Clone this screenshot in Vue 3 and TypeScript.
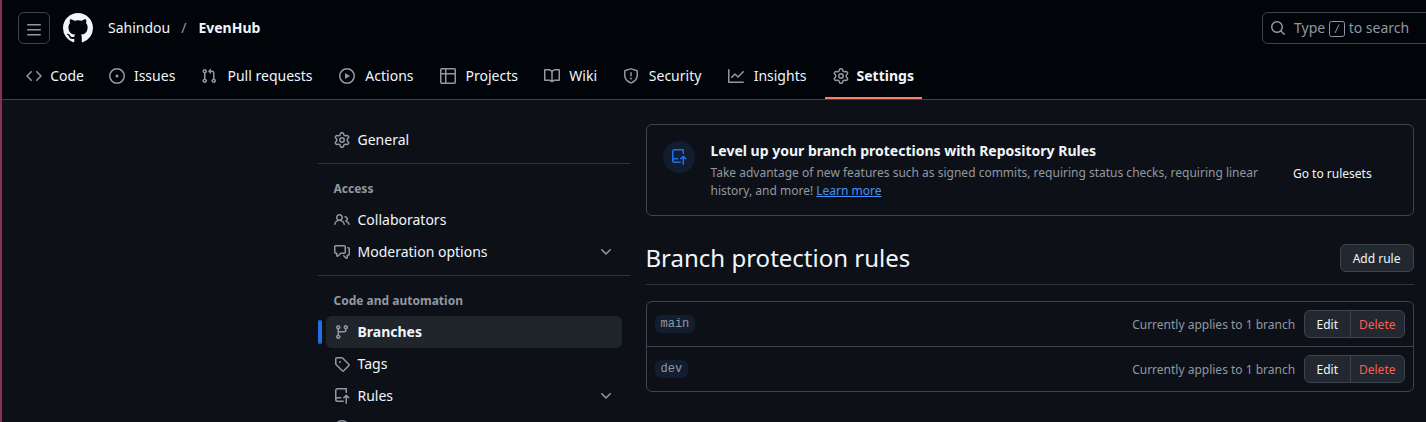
<script setup lang="ts">
type IconName =
  | 'code' | 'issue' | 'pull' | 'play' | 'table' | 'book' | 'shield' | 'graph'
  | 'gear' | 'people' | 'discussion' | 'branch' | 'tag' | 'repoPush'

interface NavItem { label: string; icon: IconName; active?: boolean; expandable?: boolean }
interface NavGroup { title?: string; items: NavItem[] }

const icons: Record<IconName, string> = {
  code: 'm11.28 3.22 4.25 4.25a.75.75 0 0 1 0 1.06l-4.25 4.25a.749.749 0 0 1-1.275-.326.749.749 0 0 1 .215-.734L13.94 8l-3.72-3.72a.749.749 0 0 1 .326-1.275.749.749 0 0 1 .734.215Zm-6.56 0a.751.751 0 0 1 1.042.018.751.751 0 0 1 .018 1.042L2.06 8l3.72 3.72a.749.749 0 0 1-.326 1.275.749.749 0 0 1-.734-.215L.47 8.53a.75.75 0 0 1 0-1.06Z',
  issue: 'M8 9.5a1.5 1.5 0 1 0 0-3 1.5 1.5 0 0 0 0 3Z M8 0a8 8 0 1 1 0 16A8 8 0 0 1 8 0ZM1.5 8a6.5 6.5 0 1 0 13 0 6.5 6.5 0 0 0-13 0Z',
  pull: 'M1.5 3.25a2.25 2.25 0 1 1 3 2.122v5.256a2.251 2.251 0 1 1-1.5 0V5.372A2.25 2.25 0 0 1 1.5 3.25Zm5.677-.177L9.573.677A.25.25 0 0 1 10 .854V2.5h1A2.5 2.5 0 0 1 13.5 5v5.628a2.251 2.251 0 1 1-1.5 0V5a1 1 0 0 0-1-1h-1v1.646a.25.25 0 0 1-.427.177L7.177 3.427a.25.25 0 0 1 0-.354ZM3.75 2.5a.75.75 0 1 0 0 1.5.75.75 0 0 0 0-1.5Zm0 9.5a.75.75 0 1 0 0 1.5.75.75 0 0 0 0-1.5Zm8.25.75a.75.75 0 1 0 1.5 0 .75.75 0 0 0-1.5 0Z',
  play: 'M8 0a8 8 0 1 1 0 16A8 8 0 0 1 8 0ZM1.5 8a6.5 6.5 0 1 0 13 0 6.5 6.5 0 0 0-13 0Zm4.879-2.773 4.264 2.559a.25.25 0 0 1 0 .428l-4.264 2.559A.25.25 0 0 1 6 10.559V5.442a.25.25 0 0 1 .379-.215Z',
  table: 'M0 1.75C0 .784.784 0 1.75 0h12.5C15.216 0 16 .784 16 1.75v12.5A1.75 1.75 0 0 1 14.25 16H1.75A1.75 1.75 0 0 1 0 14.25ZM6.5 6.5v8h7.75a.25.25 0 0 0 .25-.25V6.5Zm8-1.5V1.75a.25.25 0 0 0-.25-.25H6.5V5Zm-13 1.5v7.75c0 .138.112.25.25.25H5v-8ZM5 5V1.5H1.75a.25.25 0 0 0-.25.25V5Z',
  book: 'M0 1.75A.75.75 0 0 1 .75 1h4.253c1.227 0 2.317.59 3 1.501A3.743 3.743 0 0 1 11.006 1h4.245a.75.75 0 0 1 .75.75v10.5a.75.75 0 0 1-.75.75h-4.507a2.25 2.25 0 0 0-1.591.659l-.622.621a.75.75 0 0 1-1.06 0l-.622-.621A2.25 2.25 0 0 0 5.258 13H.75a.75.75 0 0 1-.75-.75Zm7.251 10.324.004-5.073-.002-2.253A2.25 2.25 0 0 0 5.003 2.5H1.5v9h3.757a3.75 3.75 0 0 1 1.994.574ZM8.755 4.75l-.004 7.322a3.752 3.752 0 0 1 1.992-.572H14.5v-9h-3.495a2.25 2.25 0 0 0-2.25 2.25Z',
  shield: 'M7.467.133a1.748 1.748 0 0 1 1.066 0l5.25 1.68A1.75 1.75 0 0 1 15 3.48V7c0 1.566-.32 3.182-1.303 4.682-.983 1.498-2.585 2.813-5.032 3.855a1.697 1.697 0 0 1-1.33 0c-2.447-1.042-4.049-2.357-5.032-3.855C1.32 10.182 1 8.566 1 7V3.48a1.75 1.75 0 0 1 1.217-1.667Zm.61 1.429a.25.25 0 0 0-.153 0l-5.25 1.68a.25.25 0 0 0-.174.238V7c0 1.358.275 2.666 1.057 3.86.784 1.194 2.121 2.34 4.366 3.297a.196.196 0 0 0 .154 0c2.245-.956 3.582-2.104 4.366-3.298C13.225 9.666 13.5 8.36 13.5 7V3.48a.251.251 0 0 0-.174-.237l-5.25-1.68ZM8.75 4.75v3a.75.75 0 0 1-1.5 0v-3a.75.75 0 0 1 1.5 0ZM9 10.5a1 1 0 1 1-2 0 1 1 0 0 1 2 0Z',
  graph: 'M1.5 1.75V13.5h13.75a.75.75 0 0 1 0 1.5H.75a.75.75 0 0 1-.75-.75V1.75a.75.75 0 0 1 1.5 0Zm14.28 2.53-5.25 5.25a.75.75 0 0 1-1.06 0L7 7.06 4.28 9.78a.751.751 0 0 1-1.042-.018.751.751 0 0 1-.018-1.042l3.25-3.25a.75.75 0 0 1 1.06 0L10 7.94l4.72-4.72a.751.751 0 0 1 1.042.018.751.751 0 0 1 .018 1.042Z',
  gear: 'M8 0a8.2 8.2 0 0 1 .701.031C9.444.095 9.99.645 10.16 1.29l.288 1.107c.018.066.079.158.212.224.231.114.454.243.668.386.123.082.233.09.299.071l1.103-.303c.644-.176 1.392.021 1.82.63.27.385.506.792.704 1.218.315.675.111 1.422-.364 1.891l-.814.806c-.049.048-.098.147-.088.294.016.257.016.515 0 .772-.01.147.038.246.088.294l.814.806c.475.469.679 1.216.364 1.891a7.977 7.977 0 0 1-.704 1.217c-.428.61-1.176.807-1.82.63l-1.102-.302c-.067-.019-.177-.011-.3.071a5.909 5.909 0 0 1-.668.386c-.133.066-.194.158-.211.224l-.29 1.106c-.168.646-.715 1.196-1.458 1.26a8.006 8.006 0 0 1-1.402 0c-.743-.064-1.289-.614-1.458-1.26l-.289-1.106c-.018-.066-.079-.158-.212-.224a5.738 5.738 0 0 1-.668-.386c-.123-.082-.233-.09-.299-.071l-1.103.303c-.644.176-1.392-.021-1.82-.63a8.12 8.12 0 0 1-.704-1.218c-.315-.675-.111-1.422.363-1.891l.815-.806c.05-.048.098-.147.088-.294a6.214 6.214 0 0 1 0-.772c.01-.147-.038-.246-.088-.294l-.815-.806C.635 6.045.431 5.298.746 4.623a7.92 7.92 0 0 1 .704-1.217c.428-.61 1.176-.807 1.82-.63l1.102.302c.067.019.177.011.3-.071.214-.143.437-.272.668-.386.133-.066.194-.158.211-.224l.29-1.106C6.009.645 6.556.095 7.299.03 7.53.01 7.764 0 8 0Zm-.571 1.525c-.036.003-.108.036-.137.146l-.289 1.105c-.147.561-.549.967-.998 1.189-.173.086-.34.183-.5.29-.417.278-.97.423-1.529.27l-1.103-.303c-.109-.03-.175.016-.195.045-.22.312-.412.644-.573.99-.014.031-.021.11.059.19l.815.806c.411.406.562.957.53 1.456a4.709 4.709 0 0 0 0 .582c.032.499-.119 1.05-.53 1.456l-.815.806c-.081.08-.073.159-.059.19.162.346.353.677.573.989.02.03.085.076.195.046l1.102-.303c.56-.153 1.113-.008 1.53.27.161.107.328.204.501.29.447.222.85.629.997 1.189l.289 1.105c.029.109.101.143.137.146a6.6 6.6 0 0 0 1.142 0c.036-.003.108-.036.137-.146l.289-1.105c.147-.561.549-.967.998-1.189.173-.086.34-.183.5-.29.417-.278.97-.423 1.529-.27l1.103.303c.109.029.175-.016.195-.045.22-.313.411-.644.573-.99.014-.031.021-.11-.059-.19l-.815-.806c-.411-.406-.562-.957-.53-1.456a4.709 4.709 0 0 0 0-.582c-.032-.499.119-1.05.53-1.456l.815-.806c.081-.08.073-.159.059-.19a6.464 6.464 0 0 0-.573-.989c-.02-.03-.085-.076-.195-.046l-1.102.303c-.56.153-1.113.008-1.53-.27a4.44 4.44 0 0 0-.501-.29c-.447-.222-.85-.629-.997-1.189l-.289-1.105c-.029-.11-.101-.143-.137-.146a6.6 6.6 0 0 0-1.142 0ZM11 8a3 3 0 1 1-6 0 3 3 0 0 1 6 0ZM9.5 8a1.5 1.5 0 1 0-3.001.001A1.5 1.5 0 0 0 9.5 8Z',
  people: 'M2 5.5a3.5 3.5 0 1 1 5.898 2.549 5.508 5.508 0 0 1 3.034 4.084.75.75 0 1 1-1.482.235 4 4 0 0 0-7.9 0 .75.75 0 0 1-1.482-.236A5.507 5.507 0 0 1 3.102 8.05 3.493 3.493 0 0 1 2 5.5ZM11 4a3.001 3.001 0 0 1 2.22 5.018 5.01 5.01 0 0 1 2.56 3.012.749.749 0 0 1-.885.954.752.752 0 0 1-.549-.514 3.507 3.507 0 0 0-2.522-2.372.75.75 0 0 1-.574-.73v-.352a.75.75 0 0 1 .416-.672A1.5 1.5 0 0 0 11 5.5.75.75 0 0 1 11 4Zm-5.5-.5a2 2 0 1 0-.001 3.999A2 2 0 0 0 5.5 3.5Z',
  discussion: 'M1.75 1h8.5c.966 0 1.75.784 1.75 1.75v5.5A1.75 1.75 0 0 1 10.25 10H7.061l-2.574 2.573A1.458 1.458 0 0 1 2 11.543V10h-.25A1.75 1.75 0 0 1 0 8.25v-5.5C0 1.784.784 1 1.75 1ZM1.5 2.75v5.5c0 .138.112.25.25.25h1a.75.75 0 0 1 .75.75v2.19l2.72-2.72a.749.749 0 0 1 .53-.22h3.5a.25.25 0 0 0 .25-.25v-5.5a.25.25 0 0 0-.25-.25h-8.5a.25.25 0 0 0-.25.25Zm13 2a.25.25 0 0 0-.25-.25h-.5a.75.75 0 0 1 0-1.5h.5c.966 0 1.75.784 1.75 1.75v5.5A1.75 1.75 0 0 1 14.25 12H14v1.543a1.458 1.458 0 0 1-2.487 1.03L9.22 12.28a.749.749 0 0 1 .326-1.275.749.749 0 0 1 .734.215l2.22 2.22v-2.19a.75.75 0 0 1 .75-.75h1a.25.25 0 0 0 .25-.25Z',
  branch: 'M9.5 3.25a2.25 2.25 0 1 1 3 2.122V6A2.5 2.5 0 0 1 10 8.5H6a1 1 0 0 0-1 1v1.128a2.251 2.251 0 1 1-1.5 0V5.372a2.25 2.25 0 1 1 1.5 0v1.836A2.493 2.493 0 0 1 6 7h4a1 1 0 0 0 1-1v-.628A2.25 2.25 0 0 1 9.5 3.25Zm-6 0a.75.75 0 1 0 1.5 0 .75.75 0 0 0-1.5 0Zm8.25-.75a.75.75 0 1 0 0 1.5.75.75 0 0 0 0-1.5ZM4.25 12a.75.75 0 1 0 0 1.5.75.75 0 0 0 0-1.5Z',
  tag: 'M1 7.775V2.75C1 1.784 1.784 1 2.75 1h5.025c.464 0 .91.184 1.238.513l6.25 6.25a1.75 1.75 0 0 1 0 2.474l-5.026 5.026a1.75 1.75 0 0 1-2.474 0l-6.25-6.25A1.752 1.752 0 0 1 1 7.775Zm1.5 0c0 .066.026.13.073.177l6.25 6.25a.25.25 0 0 0 .354 0l5.025-5.025a.25.25 0 0 0 0-.354l-6.25-6.25a.25.25 0 0 0-.177-.073H2.75a.25.25 0 0 0-.25.25ZM6 5a1 1 0 1 1 0 2 1 1 0 0 1 0-2Z',
  repoPush: 'M1 2.5A2.5 2.5 0 0 1 3.5 0h8.75a.75.75 0 0 1 .75.75v3.5a.75.75 0 0 1-1.5 0V1.5h-8a1 1 0 0 0-1 1v6.708A2.493 2.493 0 0 1 3.5 9h3.25a.75.75 0 0 1 0 1.5H3.5a1 1 0 0 0 0 2h5.75a.75.75 0 0 1 0 1.5H3.5A2.5 2.5 0 0 1 1 11.5Zm13.23 7.79-1.24-1.15v6.11a.75.75 0 0 1-1.5 0V9.14l-1.22 1.15a.75.75 0 0 1-1.04-1.08l2.505-2.36a.75.75 0 0 1 1.02 0l2.505 2.36a.75.75 0 1 1-1.03 1.08Z',
}
const chevron = 'M12.78 5.22a.749.749 0 0 1 0 1.06l-4.25 4.25a.749.749 0 0 1-1.06 0L3.22 6.28a.749.749 0 1 1 1.06-1.06L8 8.939l3.72-3.719a.749.749 0 0 1 1.06 0Z'

const tabs: NavItem[] = [
  { label: 'Code', icon: 'code' },
  { label: 'Issues', icon: 'issue' },
  { label: 'Pull requests', icon: 'pull' },
  { label: 'Actions', icon: 'play' },
  { label: 'Projects', icon: 'table' },
  { label: 'Wiki', icon: 'book' },
  { label: 'Security', icon: 'shield' },
  { label: 'Insights', icon: 'graph' },
  { label: 'Settings', icon: 'gear', active: true },
]

const groups: NavGroup[] = [
  { items: [{ label: 'General', icon: 'gear' }] },
  {
    title: 'Access',
    items: [
      { label: 'Collaborators', icon: 'people' },
      { label: 'Moderation options', icon: 'discussion', expandable: true },
    ],
  },
  {
    title: 'Code and automation',
    items: [
      { label: 'Branches', icon: 'branch', active: true },
      { label: 'Tags', icon: 'tag' },
      { label: 'Rules', icon: 'repoPush', expandable: true },
      { label: '', icon: 'play' },
    ],
  },
]

const rules: string[] = ['main', 'dev']
</script>

<template>
  <div class="page">
    <header class="header">
      <div class="topbar">
        <button class="menu" aria-label="Menu">
          <svg class="icon" viewBox="0 0 16 16"><path d="M1 2.75A.75.75 0 0 1 1.75 2h12.5a.75.75 0 0 1 0 1.5H1.75A.75.75 0 0 1 1 2.75Zm0 5A.75.75 0 0 1 1.75 7h12.5a.75.75 0 0 1 0 1.5H1.75A.75.75 0 0 1 1 7.75ZM1.75 12h12.5a.75.75 0 0 1 0 1.5H1.75a.75.75 0 0 1 0-1.5Z" /></svg>
        </button>
        <svg class="logo" viewBox="0 0 16 16"><path d="M8 0c4.42 0 8 3.58 8 8a8.013 8.013 0 0 1-5.45 7.59c-.4.08-.55-.17-.55-.38 0-.27.01-1.13.01-2.2 0-.75-.25-1.23-.54-1.48 1.78-.2 3.65-.88 3.65-3.95 0-.88-.31-1.59-.82-2.15.08-.2.36-1.02-.08-2.12 0 0-.67-.22-2.2.82-.64-.18-1.32-.27-2-.27-.68 0-1.36.09-2 .27-1.53-1.03-2.2-.82-2.2-.82-.44 1.1-.16 1.92-.08 2.12-.51.56-.82 1.28-.82 2.15 0 3.06 1.86 3.75 3.64 3.95-.23.2-.44.55-.51 1.07-.46.21-1.61.55-2.33-.66-.15-.24-.6-.83-1.23-.82-.67.01-.27.38.01.53.34.19.73.9.82 1.13.16.45.68 1.31 2.69.94 0 .67.01 1.3.01 1.49 0 .21-.15.45-.55.38A7.995 7.995 0 0 1 0 8c0-4.42 3.58-8 8-8Z" /></svg>
        <nav class="crumbs">
          <span>Sahindou</span><span class="slash">/</span><b>EvenHub</b>
        </nav>
        <div class="search">
          <svg class="icon" viewBox="0 0 16 16"><path d="M10.68 11.74a6 6 0 0 1-7.922-8.982 6 6 0 0 1 8.982 7.922l3.04 3.04a.749.749 0 0 1-.326 1.275.749.749 0 0 1-.734-.215ZM11.5 7a4.499 4.499 0 1 0-8.997 0A4.499 4.499 0 0 0 11.5 7Z" /></svg>
          <span class="hint">Type</span>
          <svg class="key" viewBox="0 0 16 16"><rect x=".5" y=".5" width="15" height="15" rx="2" /><path d="M10 3.5 6 12" /></svg>
          <span>to search</span>
        </div>
      </div>
      <nav class="tabs">
        <a v-for="tab in tabs" :key="tab.label" class="tab" :class="{ active: tab.active }">
          <svg class="icon" viewBox="0 0 16 16"><path :d="icons[tab.icon]" /></svg>
          <span class="tab-label" :data-content="tab.label">{{ tab.label }}</span>
        </a>
      </nav>
    </header>

    <div class="body">
      <aside class="sidebar">
        <section v-for="(group, i) in groups" :key="i" class="group">
          <h3 v-if="group.title">{{ group.title }}</h3>
          <a v-for="item in group.items" :key="item.label" class="item" :class="{ active: item.active }">
            <svg class="icon" viewBox="0 0 16 16"><path :d="icons[item.icon]" /></svg>
            <span class="item-label">{{ item.label }}</span>
            <svg v-if="item.expandable" class="icon" viewBox="0 0 16 16"><path :d="chevron" /></svg>
          </a>
        </section>
      </aside>

      <main class="main">
        <section class="banner">
          <div class="badge"><svg class="icon" viewBox="0 0 16 16"><path :d="icons.repoPush" /></svg></div>
          <div class="banner-text">
            <h2>Level up your branch protections with Repository Rules</h2>
            <p>Take advantage of new features such as signed commits, requiring status checks, requiring linear history, and more! <a>Learn more</a></p>
          </div>
          <a class="goto">Go to rulesets</a>
        </section>

        <div class="heading">
          <h1>Branch protection rules</h1>
          <button class="btn">Add rule</button>
        </div>

        <ul class="rules">
          <li v-for="rule in rules" :key="rule">
            <code>{{ rule }}</code>
            <span class="applies">Currently applies to 1 branch</span>
            <div class="btn-group">
              <button class="btn">Edit</button>
              <button class="btn danger">Delete</button>
            </div>
          </li>
        </ul>
      </main>
    </div>
  </div>
</template>

<style>
body {
  margin: 0;
  background: #0d1117;
}
</style>

<style scoped>
* {
  box-sizing: border-box;
}
.page {
  width: 1426px;
  height: 422px;
  overflow: hidden;
  border-left: 2px solid #85325a;
  background: #0d1117;
  color: #f0f6fc;
  font: 14px/20px "Noto Sans", sans-serif;
}
.icon {
  width: 16px;
  height: 16px;
  flex: none;
  fill: #9198a1;
}
.header {
  height: 100px;
  background: #010409;
  border-bottom: 1px solid #3d444d;
}
.topbar {
  display: flex;
  align-items: center;
  height: 56px;
  padding-left: 16px;
}
.menu {
  display: grid;
  place-items: center;
  width: 32px;
  height: 32px;
  padding: 3px 0 0;
  background: none;
  border: 1px solid #3d444d;
  border-radius: 6px;
}
.logo {
  width: 30px;
  height: 30px;
  margin-left: 13px;
  fill: #f0f6fc;
}
.crumbs {
  display: flex;
  margin-left: 15px;
}
.slash {
  margin: 0 12px 0 11px;
  color: #9198a1;
}
b {
  font-weight: 700;
}
.search {
  display: flex;
  align-items: center;
  width: 180px;
  height: 32px;
  margin-left: auto;
  margin-right: -16px;
  padding-left: 7px;
  border: 1px solid #3d444d;
  border-radius: 6px;
  color: #9198a1;
}
.hint {
  margin-left: 8px;
}
.key {
  width: 16px;
  height: 16px;
  margin: 1px 3.5px 0 4px;
  fill: none;
  stroke: #9198a1;
}
.tabs {
  display: flex;
  gap: 8.1px;
  height: 43px;
  padding-left: 15.6px;
}
.tab {
  display: flex;
  align-items: center;
  gap: 8px;
  padding: 0 8px 3px;
}
.tab.active {
  padding-bottom: 1px;
  border-bottom: 2px solid #f78166;
  font-weight: 700;
}
.tab-label {
  display: grid;
  justify-items: center;
}
.tab-label::before {
  content: attr(data-content);
  height: 0;
  font-weight: 700;
  visibility: hidden;
}
.body {
  display: flex;
  gap: 16px;
  padding: 24px 0 0 315.5px;
}
.sidebar {
  width: 312px;
}
.group + .group {
  margin-top: 7px;
  padding-top: 8px;
  border-top: 1px solid #2f353d;
}
.group h3 {
  margin: 0;
  padding: 8px 16px 6px;
  color: #9198a1;
  font-size: 12px;
  font-weight: 700;
  line-height: 18px;
}
.item {
  position: relative;
  display: flex;
  align-items: center;
  gap: 8px;
  height: 32px;
  margin: 0 8px;
  padding: 0 8px;
  border-radius: 6px;
}
.item-label {
  flex: 1;
}
.item.active {
  background: #20252c;
  font-weight: 700;
}
.item.active::before {
  content: "";
  position: absolute;
  left: -8px;
  top: 4px;
  width: 4px;
  height: 24px;
  border-radius: 6px;
  background: #1f6feb;
}
.main {
  width: 768px;
}
.banner {
  display: flex;
  height: 92px;
  padding: 16px;
  border: 1px solid #3d444d;
  border-radius: 6px;
}
.badge {
  display: grid;
  place-items: center;
  width: 32px;
  height: 32px;
  border-radius: 50%;
  background: #121d2f;
}
.badge .icon {
  fill: #1f6feb;
}
.banner-text {
  width: 566px;
  margin-left: 16px;
}
.banner h2 {
  margin: 0 0 3px;
  font-size: 14px;
  font-weight: 700;
  line-height: 20px;
}
.banner p {
  margin: 0;
  color: #9198a1;
  font-size: 12px;
  line-height: 18px;
}
.banner p a {
  color: #4493f8;
  text-decoration: underline;
}
.goto {
  align-self: center;
  margin-left: 16.5px;
  padding-top: 8px;
  font-size: 12px;
}
.heading {
  display: flex;
  justify-content: space-between;
  align-items: center;
  height: 69px;
  border-bottom: 1px solid #2f353d;
}
.heading h1 {
  margin: 15px 0 0;
  font-size: 24px;
  font-weight: 400;
  line-height: 36px;
}
.heading .btn {
  margin-top: 16px;
}
.btn {
  height: 28px;
  padding: 1px 12px 0;
  border: 1px solid #3d444d;
  border-radius: 6px;
  background: #212830;
  color: #f0f6fc;
  font: 12px/20px "Noto Sans", sans-serif;
}
.rules {
  margin: 16px 0 0;
  padding: 0;
  list-style: none;
  border: 1px solid #3d444d;
  border-radius: 6px;
}
.rules li {
  display: flex;
  align-items: center;
  height: 44px;
  padding: 0 8px;
}
.rules li + li {
  height: 45px;
  border-top: 1px solid #3d444d;
}
code {
  height: 18px;
  padding: 0 6px;
  border-radius: 6px;
  background: #121d2f;
  color: #9198a1;
  font: 12px/18px "Liberation Mono", monospace;
}
.applies {
  margin: 0 8.4px 0 auto;
  padding-top: 2px;
  color: #9198a1;
  font-size: 12px;
}
.btn-group {
  display: flex;
}
.btn-group .btn:first-child {
  border-radius: 6px 0 0 6px;
}
.btn-group .btn.danger {
  margin-left: -1px;
  padding: 1px 8px 0;
  border-radius: 0 6px 6px 0;
  color: #fa5e55;
}
</style>
